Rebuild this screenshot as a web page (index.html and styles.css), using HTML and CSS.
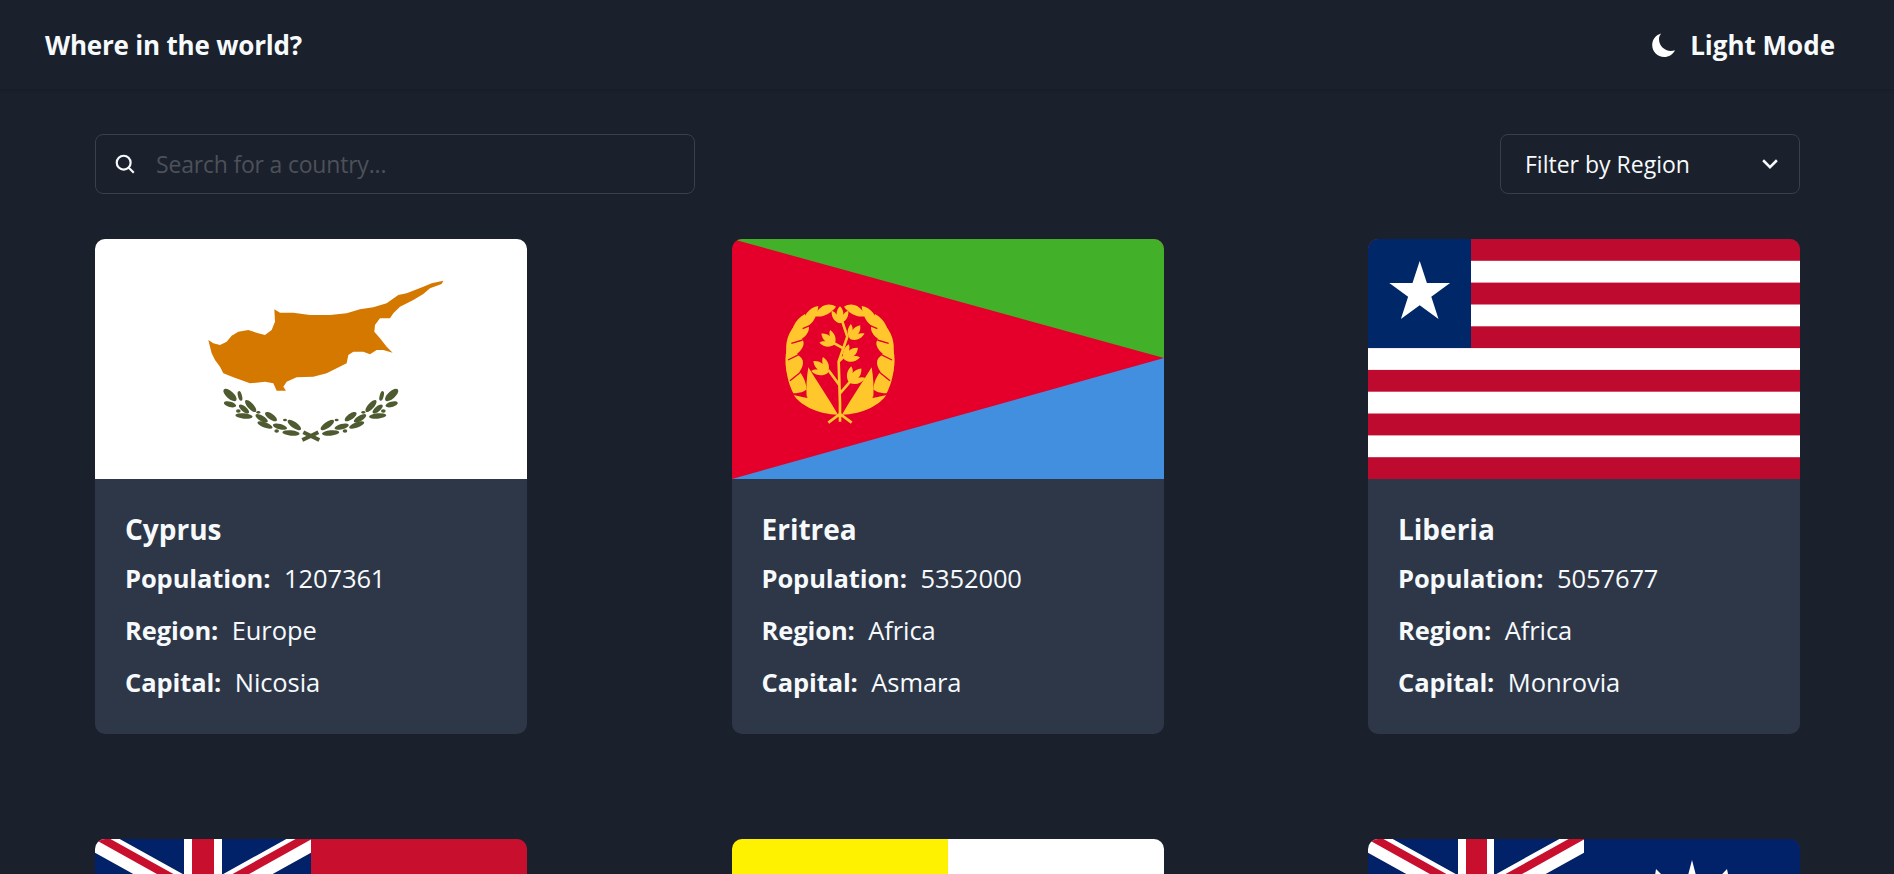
FILE: index.html
```html
<!DOCTYPE html>
<html lang="en">

<head>
    <meta charset="UTF-8" />
    <meta name="viewport" content="width=device-width, initial-scale=1" />
    <title>Where in the world?</title>
    <link rel="stylesheet" href="styles.css">
</head>

<body>

    <header class="top-bar">
        <h1 class="logo">Where in the world?</h1>
        <button class="theme-btn">
            <svg class="moon" viewBox="0 0 24 24"><path d="M9.2 0.6C3.9 1.9 0.2 6.6 0.2 12c0 6.6 5.4 12 12 12 4.6 0 8.8-2.7 10.8-6.8-1.300 0.500-2.700 0.700-4.100 0.700C12.300 17.900 7 12.600 7 6c0-1.900 0.800-3.800 2.200-5.400z" /></svg>
            Light Mode
        </button>
    </header>

    <main class="content">
        <div class="controls">
            <label class="search">
                <svg class="search-icon" viewBox="0 0 20 20"><circle cx="8.800" cy="8.800" r="6.300" /><path d="M13.400 13.400L18 18" /></svg>
                <input type="text" placeholder="Search for a country..." />
            </label>
            <div class="filter">
                <span>Filter by Region</span>
                <svg class="chevron" viewBox="0 0 16 16"><path d="M2.500 5l5.500 5.500L13.500 5" /></svg>
            </div>
        </div>

        <section class="grid">
            <article class="card">
                <svg class="flag" viewBox="0 0 432 240">
                    <rect width="432" height="240" fill="#fff" />
                    <g transform="translate(95 31) scale(.3333)">
                        <path fill="#d57800" d="M55 210L70 220L90 225L110 215L125 197L145 185L175 180L205 190L225 195L245 180L255 155L253 118L270 128L310 128L360 135L420 135L470 130L510 118L550 112L590 100L625 75L650 70L700 50L725 40L760 32L755 42L720 55L700 72L670 90L630 110L610 130L600 145L570 145L555 165L553 185L570 205L590 230L608 248L580 240L560 240L540 253L520 245L490 245L475 255L470 280L440 295L410 310L370 320L320 322L290 335L280 350L288 362L260 362L250 340L225 335L180 340L130 322L100 310L90 290L75 270L65 250L60 230z" />
                        <g fill="#4e5b31" id="branch">
                            <ellipse cx="120" cy="375" rx="25" ry="11" transform="rotate(42 120 375)" />
                            <ellipse cx="150" cy="378" rx="15" ry="6" transform="rotate(75 150 378)" />
                            <ellipse cx="120" cy="403" rx="19" ry="8" transform="rotate(15 120 403)" />
                            <ellipse cx="182" cy="408" rx="23" ry="9" transform="rotate(48 182 408)" />
                            <ellipse cx="162" cy="417" rx="19" ry="8" transform="rotate(40 162 417)" />
                            <ellipse cx="145" cy="423" rx="7" ry="5" />
                            <ellipse cx="162" cy="438" rx="26" ry="8" transform="rotate(5 162 438)" />
                            <ellipse cx="215" cy="445" rx="21" ry="8" transform="rotate(30 215 445)" />
                            <ellipse cx="243" cy="440" rx="21" ry="9" transform="rotate(35 243 440)" />
                            <ellipse cx="205" cy="427" rx="6" ry="4" />
                            <ellipse cx="270" cy="470" rx="22" ry="8" transform="rotate(15 270 470)" />
                            <ellipse cx="225" cy="465" rx="24" ry="8" transform="rotate(20 225 465)" />
                            <ellipse cx="313" cy="465" rx="24" ry="9" transform="rotate(35 313 465)" />
                            <ellipse cx="303" cy="489" rx="26" ry="8" transform="rotate(5 303 489)" />
                            <ellipse cx="260" cy="483" rx="7" ry="5" />
                            <ellipse cx="285" cy="450" rx="6" ry="4" />
                        </g>
                        <use href="#branch" transform="translate(725 0) scale(-1 1)" />
                        <path stroke="#4e5b31" stroke-width="12" d="M337 510L385 487M388 510L340 487" />
                    </g>
                </svg>
                <div class="card-body">
                    <h2>Cyprus</h2>
                    <p><b>Population:</b> 1207361</p>
                    <p><b>Region:</b> Europe</p>
                    <p><b>Capital:</b> Nicosia</p>
                </div>
            </article>

            <article class="card">
                <svg class="flag" viewBox="0 0 432 240">
                    <rect width="432" height="240" fill="#e4002b" />
                    <polygon points="0,0 432,0 432,119" fill="#43b02a" />
                    <polygon points="0,240 432,240 432,119" fill="#418fde" />
                    <defs>
                        <path id="sprig" d="M0 24C-16 20-27 6-25-14-18-12-13-7-10-2-11-11-7-20 0-27 7-20 11-11 10-2 13-7 18-12 25-14 27 6 16 20 0 24z" />
                    </defs>
                    <g transform="translate(28 51) scale(.3333)" fill="#ffc72c">
                        <g id="wreath">
                            <path d="M228 50C205 36 178 46 163 78 185 84 212 72 228 50z" />
                            <path d="M175 48C148 52 125 78 128 115 150 112 172 85 175 48z" />
                            <path d="M135 72C105 88 88 122 94 160 122 155 155 130 145 105z" />
                            <path d="M103 108C80 135 72 172 84 210 112 195 140 170 128 150z" />
                            <path d="M84 165C72 200 74 240 90 272 118 252 138 225 125 205z" />
                            <path d="M78 228C80 262 90 290 100 310 118 310 135 305 140 298 138 270 125 255 120 245z" />
                            <path d="M145 232C140 262 138 290 140 322L100 313C118 345 175 374 234 374 205 325 172 275 145 232z" />
                            <path fill="none" stroke="#e4002b" stroke-width="4" d="M128 116L156 104M94 160L128 150M84 210L124 190M90 272L130 240M100 313L142 322" />
                        </g>
                        <use href="#wreath" transform="translate(480 0) scale(-1 1)" />
                        <path fill="none" stroke="#ffc72c" stroke-width="8" d="M240 395L240 340 236 215 262 140 247 95M236 215L262 190M238 285L205 240M240 310L275 270M250 175L205 150M205 398L240 372 275 398" />
                        <use href="#sprig" transform="translate(240 76)" />
                        <use href="#sprig" transform="translate(285 128) rotate(35)" />
                        <use href="#sprig" transform="translate(205 148) rotate(-50)" />
                        <use href="#sprig" transform="translate(272 192) rotate(50) scale(1.05)" />
                        <use href="#sprig" transform="translate(183 232) rotate(-50) scale(1.1)" />
                        <use href="#sprig" transform="translate(285 258) rotate(40) scale(1.1)" />
                    </g>
                </svg>
                <div class="card-body">
                    <h2>Eritrea</h2>
                    <p><b>Population:</b> 5352000</p>
                    <p><b>Region:</b> Africa</p>
                    <p><b>Capital:</b> Asmara</p>
                </div>
            </article>

            <article class="card">
                <svg class="flag" viewBox="0 0 432 240">
                    <rect width="432" height="240" fill="#bf0a30" />
                    <g fill="#fff">
                        <rect y="21.800" width="432" height="21.800" />
                        <rect y="65.500" width="432" height="21.800" />
                        <rect y="109.100" width="432" height="21.800" />
                        <rect y="152.700" width="432" height="21.800" />
                        <rect y="196.400" width="432" height="21.800" />
                    </g>
                    <rect width="103" height="109" fill="#002868" />
                    <polygon fill="#fff" points="51.700,22 58.900,44.100 82.100,44.100 63.300,57.800 70.500,79.900 51.700,66.200 32.900,79.900 40.100,57.800 21.300,44.100 44.500,44.100" />
                </svg>
                <div class="card-body">
                    <h2>Liberia</h2>
                    <p><b>Population:</b> 5057677</p>
                    <p><b>Region:</b> Africa</p>
                    <p><b>Capital:</b> Monrovia</p>
                </div>
            </article>

            <article class="card">
                <svg class="flag" viewBox="0 0 432 240">
                    <rect width="432" height="240" fill="#c8102e" />
                    <svg width="216" height="120" viewBox="0 0 216 120">
                        <rect width="216" height="120" fill="#012169" />
                        <path stroke="#fff" stroke-width="24" d="M0 0L216 120M216 0L0 120" />
                        <path stroke="#c8102e" stroke-width="8" d="M0 -4L108 56M216 -4L108 56" />
                        <rect x="89" width="38" height="120" fill="#fff" />
                        <rect x="97" width="22" height="120" fill="#c8102e" />
                    </svg>
                </svg>
            </article>

            <article class="card">
                <svg class="flag" viewBox="0 0 432 240">
                    <rect width="216" height="240" fill="#fff200" />
                    <rect x="216" width="216" height="240" fill="#fff" />
                </svg>
            </article>

            <article class="card">
                <svg class="flag" viewBox="0 0 432 240">
                    <rect width="432" height="240" fill="#012169" />
                    <svg width="216" height="120" viewBox="0 0 216 120">
                        <path stroke="#fff" stroke-width="24" d="M0 0L216 120M216 0L0 120" />
                        <path stroke="#c8102e" stroke-width="8" d="M0 -4L108 56M216 -4L108 56" />
                        <rect x="90" width="36" height="120" fill="#fff" />
                        <rect x="98" width="21" height="120" fill="#c8102e" />
                    </svg>
                    <polygon fill="#fff" points="324,21 331,48 355,38 345,56 359,62 288,62 303,56 294,38 317,48" />
                    <polygon fill="#fff" points="359,30 363,50 340,50" />
                    <polygon fill="#fff" points="288,30 285,50 308,50" />
                </svg>
            </article>
        </section>
    </main>

</body>

</html>
```

FILE: styles.css
```css
* {
    box-sizing: border-box;
}

html,
body {
    height: 100vh;
    overflow: hidden;
}

body {
    font-family: "Open Sans", "Noto Sans", sans-serif;
    background: #1a202c;
    color: #f7fafc;
    margin: 0;
    padding: 0;
}

.top-bar {
    display: flex;
    justify-content: space-between;
    align-items: center;
    height: 89px;
    padding: 0 59px 0 45px;
    box-shadow: 0 1px 3px rgba(0, 0, 0, 0.12);
}

.logo {
    margin: 0;
    font-size: 26px;
    font-weight: 700;
    letter-spacing: -0.2px;
}

.theme-btn {
    display: flex;
    align-items: center;
    gap: 14px;
    padding: 0;
    background: none;
    border: none;
    color: #f7fafc;
    font-family: inherit;
    font-size: 26px;
    font-weight: 700;
}

.moon {
    width: 24px;
    height: 24px;
    fill: #fff;
}

.content {
    padding: 45px 94px 0 95px;
}

.controls {
    display: flex;
    justify-content: space-between;
    margin-bottom: 45px;
}

.search,
.filter {
    display: flex;
    align-items: center;
    height: 60px;
    border: 1px solid #3a3f4a;
    border-radius: 8px;
}

.search {
    width: 600px;
    padding-left: 18px;
    gap: 18px;
}

.search-icon {
    width: 22px;
    height: 22px;
    fill: none;
    stroke: #f7fafc;
    stroke-width: 2;
}

.search input {
    flex: 1;
    background: none;
    border: none;
    outline: none;
    color: #f7fafc;
    font-family: inherit;
    font-size: 23px;
    letter-spacing: -0.2px;
}

.search input::placeholder {
    color: #4d5159;
    opacity: 1;
}

.filter {
    width: 300px;
    justify-content: space-between;
    padding: 0 19px 0 24px;
    font-size: 23px;
}

.chevron {
    width: 20px;
    height: 20px;
    fill: none;
    stroke: #f7fafc;
    stroke-width: 2;
}

.grid {
    display: grid;
    grid-template-columns: repeat(3, 432px);
    justify-content: space-between;
    row-gap: 105px;
}

.card {
    background: #2d3748;
    border-radius: 10px;
    overflow: hidden;
}

.flag {
    display: block;
    width: 432px;
    height: 240px;
}

.card-body {
    height: 255px;
    padding: 32px 30px 0;
}

.card-body h2 {
    margin: 0 0 15px;
    font-size: 28px;
    line-height: 36px;
    font-weight: 700;
}

.card-body p {
    margin: 0 0 19px;
    font-size: 25.500px;
    line-height: 33px;
    letter-spacing: -0.1px;
}

.card-body b {
    margin-right: 7px;
}
```
